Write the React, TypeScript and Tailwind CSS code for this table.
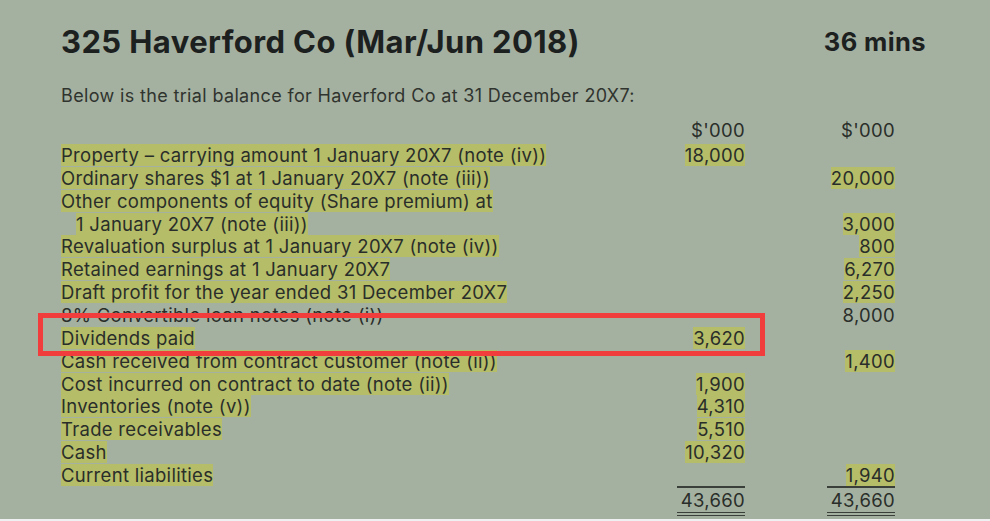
import React from 'react';

type Row = {
  label: string;
  indent?: boolean;
  hl?: boolean;
  c1?: string;
  c2?: string;
  h1?: boolean;
  h2?: boolean;
};

const rows: Row[] = [
  { label: 'Property – carrying amount 1 January 20X7 (note (iv))', hl: true, c1: '18,000', h1: true },
  { label: 'Ordinary shares $1 at 1 January 20X7 (note (iii))', hl: true, c2: '20,000', h2: true },
  { label: 'Other components of equity (Share premium) at', hl: true },
  { label: '1 January 20X7 (note (iii))', indent: true, hl: true, c2: '3,000', h2: true },
  { label: 'Revaluation surplus at 1 January 20X7 (note (iv))', hl: true, c2: '800', h2: true },
  { label: 'Retained earnings at 1 January 20X7', hl: true, c2: '6,270', h2: true },
  { label: 'Draft profit for the year ended 31 December 20X7', hl: true, c2: '2,250', h2: true },
  { label: '8% Convertible loan notes (note (i))', c2: '8,000' },
  { label: 'Dividends paid', hl: true, c1: '3,620', h1: true },
  { label: 'Cash received from contract customer (note (ii))', hl: true, c2: '1,400', h2: true },
  { label: 'Cost incurred on contract to date (note (ii))', hl: true, c1: '1,900', h1: true },
  { label: 'Inventories (note (v))', hl: true, c1: '4,310', h1: true },
  { label: 'Trade receivables', hl: true, c1: '5,510', h1: true },
  { label: 'Cash', hl: true, c1: '10,320', h1: true },
  { label: 'Current liabilities', hl: true, c2: '1,940', h2: true },
];

function Mark({ on, children }: { on?: boolean; children: React.ReactNode }) {
  return (
    <span className={`inline-block h-[22px] leading-[22px] ${on ? 'bg-[#b5bd69]' : ''}`}>
      {children}
    </span>
  );
}

export default function App() {
  return (
    <div className="w-[990px] h-[521px] bg-[#eef0f2] overflow-hidden" style={{ fontFamily: 'Inter, "Liberation Sans", sans-serif' }}>
      <div className="relative h-[519px] bg-[#a5b1a0] text-[#2a2e2a]">
        {/* Header */}
        <div className="flex items-center justify-between pl-[61px] pr-[64px] pt-[24px]">
          <h1 className="text-[31px] leading-[36px] font-bold tracking-[0.4px] text-[#1c201f]">
            325 Haverford Co (Mar/Jun 2018)
          </h1>
          <span className="text-[25.5px] leading-[36px] font-bold tracking-[0.4px] text-[#1c201f]">
            36 mins
          </span>
        </div>

        <p className="pl-[61px] mt-[24px] text-[18px] leading-[24px] tracking-[0.35px] text-[#30342f]">
          Below is the trial balance for Haverford Co at 31 December 20X7:
        </p>

        {/* Trial balance */}
        <div className="pl-[61px] mt-[11px] text-[18.5px] tracking-[0.3px]">
          <div className="grid grid-cols-[600px_84px_150px] leading-[23px]">
            <div />
            <div className="text-right">$'000</div>
            <div className="text-right">$'000</div>
          </div>
          {rows.map((r, i) => (
            <div key={i} className="grid grid-cols-[600px_84px_150px] h-[22.86px] items-center">
              <div className={r.indent ? 'pl-[15px]' : ''}>
                <Mark on={r.hl}>{r.label}</Mark>
              </div>
              <div className="text-right">{r.c1 && <Mark on={r.h1}>{r.c1}</Mark>}</div>
              <div className="text-right">{r.c2 && <Mark on={r.h2}>{r.c2}</Mark>}</div>
            </div>
          ))}
          {/* Totals */}
          <div className="grid grid-cols-[600px_84px_150px] mt-[1px]">
            <div />
            <div className="flex justify-end">
              <div className="w-[68px] border-t-2 border-b-[4px] border-double border-b-[#3a3f3a] border-t-[#3a3f3a] text-right leading-[24px]">
                43,660
              </div>
            </div>
            <div className="flex justify-end">
              <div className="w-[68px] border-t-2 border-b-[4px] border-double border-b-[#3a3f3a] border-t-[#3a3f3a] text-right leading-[24px]">
                43,660
              </div>
            </div>
          </div>
        </div>

        {/* Red highlight frame */}
        <div className="absolute left-[38px] top-[313px] w-[727px] h-[43px] border-[5px] border-[#f23d3d]" />
      </div>
    </div>
  );
}
